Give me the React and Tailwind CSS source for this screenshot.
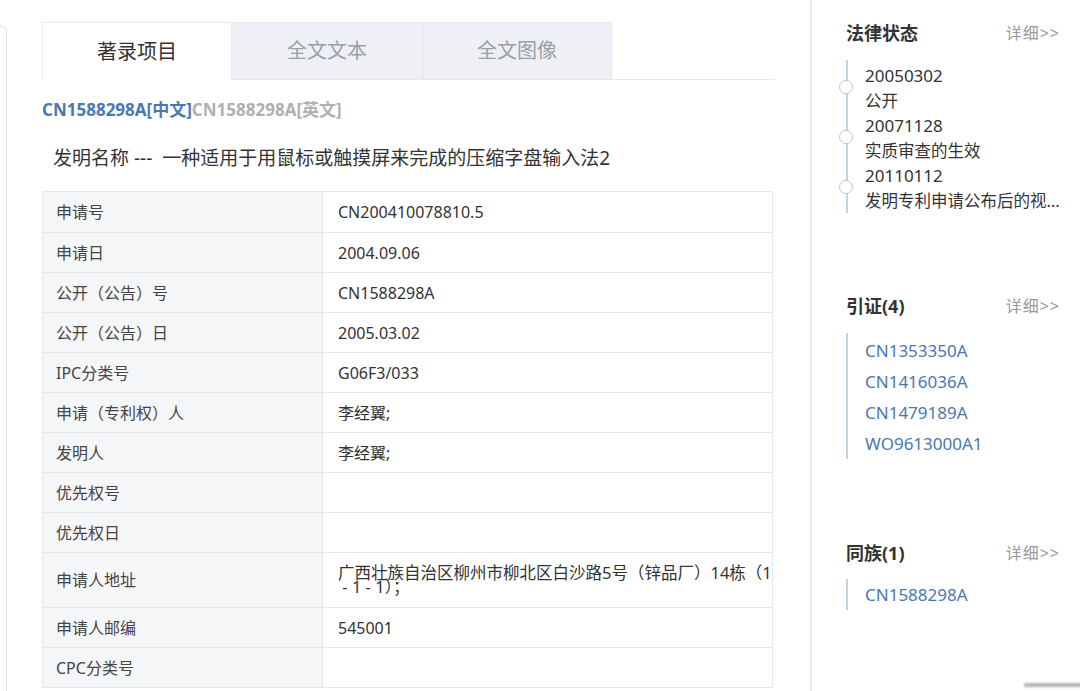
import React from "react";

const rows = [
  ["申请号", "CN200410078810.5"],
  ["申请日", "2004.09.06"],
  ["公开（公告）号", "CN1588298A"],
  ["公开（公告）日", "2005.03.02"],
  ["IPC分类号", "G06F3/033"],
  ["申请（专利权）人", "李经翼;"],
  ["发明人", "李经翼;"],
  ["优先权号", ""],
  ["优先权日", ""],
  ["申请人地址", "ADDR"],
  ["申请人邮编", "545001"],
  ["CPC分类号", ""],
];

const timeline = [
  ["20050302", "公开"],
  ["20071128", "实质审查的生效"],
  ["20110112", "发明专利申请公布后的视..."],
];

const cites = ["CN1353350A", "CN1416036A", "CN1479189A", "WO9613000A1"];

const font = { fontFamily: "'Noto Sans','Noto Sans CJK SC',sans-serif" };

function Heading({ title }) {
  return (
    <div className="flex items-center justify-between pr-[24px] leading-[24px]">
      <span className="text-[18px] font-bold text-[#333]">{title}</span>
      <span className="text-[16px] text-[#9a9a9a] tracking-[1px]">详细&gt;&gt;</span>
    </div>
  );
}

export default function App() {
  return (
    <div className="flex h-[691px] w-[1080px] overflow-hidden bg-white" style={font}>
      <div className="mt-[25px] w-[7px] shrink-0 rounded-tr-[8px] border-r border-t border-[#e3e3e3]" />
      <main className="w-[805px] shrink-0 border-r-2 border-[#ebebeb] pl-[35px] pt-[22px]">
        <div className="flex w-[733px] items-stretch">
          <div className="flex h-[58px] w-[190px] items-center justify-center border-l border-r border-t border-[#e9ebef] bg-white text-[20px] text-[#333]">
            著录项目
          </div>
          <div className="flex h-[58px] w-[190px] items-center justify-center border-b border-t border-[#e6e9ee] bg-[#eef0f5] text-[20px] text-[#9aa0a8]">
            全文文本
          </div>
          <div className="flex h-[58px] w-[190px] items-center justify-center border-b border-l border-r border-t border-[#e2e5ea] bg-[#eef0f5] text-[20px] text-[#9aa0a8]">
            全文图像
          </div>
          <div className="flex-1 border-b border-[#e6e9ee]" />
        </div>
        <div className="mt-[18px] text-[17px] font-bold leading-[24px]">
          <span className="text-[#4a78b2]">CN1588298A[中文]</span>
          <span className="text-[#b0b0b0]">CN1588298A[英文]</span>
        </div>
        <div className="mt-[23px] pl-[11px] text-[19px] leading-[26px] text-[#333]">
          发明名称 ---&nbsp; 一种适用于用鼠标或触摸屏来完成的压缩字盘输入法2
        </div>
        <div className="mt-[20px] w-[731px] border border-[#e4e7eb]">
          {rows.map(([k, v], i) => (
            <div
              key={k}
              className={`flex ${i > 0 ? "border-t border-[#e4e7eb]" : ""} ${v === "ADDR" ? "h-[55px]" : "h-[40px]"}`}
            >
              <div className="flex w-[280px] shrink-0 items-center border-r border-[#e4e7eb] bg-[#f5f6f8] pl-[13px] text-[16px] text-[#444]">
                {k}
              </div>
              <div className="flex flex-1 items-center pl-[15px] text-[16px] text-[#333]">
                {v === "ADDR" ? (
                  <div className="text-[16.5px] leading-[14px]">
                    广西壮族自治区柳州市柳北区白沙路5号（锌品厂）14栋（1
                    <br />
                    &nbsp;- 1 - 1）；
                  </div>
                ) : (
                  v
                )}
              </div>
            </div>
          ))}
        </div>
      </main>
      <aside className="flex-1 pl-[34px] pt-[21px]">
        <Heading title="法律状态" />
        <div className="mt-[15px] border-l-2 border-[#c3d3e5] pl-[17px] pt-[3px] text-[17px] leading-[25px] text-[#333]">
          {timeline.map(([d, t]) => (
            <div key={d} className="relative">
              <span className="absolute left-[-26px] top-[17px] h-[14px] w-[14px] rounded-full border-[1.5px] border-[#b8c7d7] bg-white" />
              <div>{d}</div>
              <div className="whitespace-nowrap text-[16.5px]">{t}</div>
            </div>
          ))}
        </div>
        <div className="mt-[81px]">
          <Heading title="引证(4)" />
        </div>
        <div className="mt-[15px] border-l-2 border-[#c3d3e5] pl-[17px] pt-[2px] text-[17px] leading-[31px] text-[#4a78b2]">
          {cites.map((c) => (
            <div key={c}>{c}</div>
          ))}
        </div>
        <div className="mt-[82px]">
          <Heading title="同族(1)" />
        </div>
        <div className="mt-[14px] border-l-2 border-[#c3d3e5] pl-[17px] text-[17px] leading-[31px] text-[#4a78b2]">
          CN1588298A
        </div>
        <div className="ml-[178px] mt-[73px] h-[4px] w-[60px] bg-[#b5b5b5] blur-[1px]" />
      </aside>
    </div>
  );
}
